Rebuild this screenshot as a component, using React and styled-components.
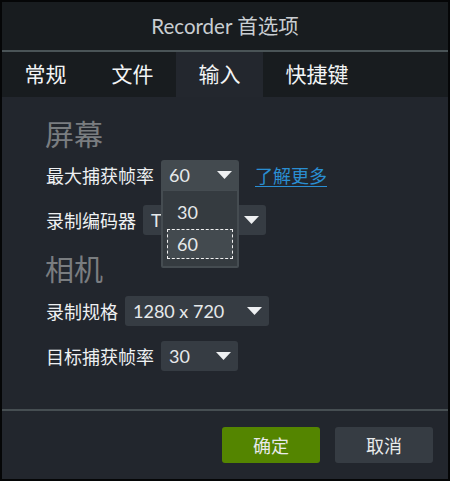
import React from "react";
import styled, { createGlobalStyle } from "styled-components";

const Global = createGlobalStyle`
  html, body { margin: 0; padding: 0; background: #000; }
  body { font-family: Lato, "Noto Sans CJK SC", sans-serif; }
  * { box-sizing: border-box; }
`;

const Window = styled.div`
  width: 450px;
  height: 481px;
  border: 2px solid #050607;
  background: #22262d;
  display: flex;
  flex-direction: column;
  overflow: hidden;
`;

const TitleBar = styled.div`
  height: 50px;
  flex: none;
  background: #181c1f;
  border-bottom: 2px solid #4a5457;
  display: flex;
  align-items: center;
  justify-content: center;
  color: #c9ced2;
  font-size: 20.5px;
  padding-bottom: 2px;
`;

const Tabs = styled.div`
  height: 45px;
  flex: none;
  background: #181c1f;
  display: flex;
`;

const Tab = styled.div`
  padding: 0 22.5px 3px;
  display: flex;
  align-items: center;
  font-size: 21px;
  color: #f2f4f5;
  background: ${(p) => (p.$active ? "#23272e" : "transparent")};
`;

const Content = styled.div`
  flex: 1;
  padding: 20px 0 0 44px;
  display: flex;
  flex-direction: column;
`;

const Heading = styled.div`
  font-size: 29px;
  line-height: 36px;
  color: #7a7d80;
  margin-left: -1px;
  margin-top: ${(p) => p.$mt || 0}px;
`;

const Row = styled.div`
  display: flex;
  align-items: center;
  gap: 7px;
  height: 30px;
  margin-top: ${(p) => p.$mt}px;
`;

const Label = styled.span`
  font-size: 18px;
  color: #eef0f2;
`;

const SelectWrap = styled.div`
  position: relative;
`;

const Select = styled.div`
  width: ${(p) => p.$w}px;
  height: 30px;
  border-radius: ${(p) => (p.$open ? "3px 3px 0 0" : "3px")};
  background: ${(p) => (p.$open ? "#434a4f" : "#363c43")};
  display: flex;
  align-items: center;
  justify-content: space-between;
  padding: 0 7px 0 8px;
  font-size: 18px;
  color: #e6e9eb;
`;

const Arrow = () => (
  <svg width="15" height="8" viewBox="0 0 15 8">
    <path d="M0 0 H15 L7.5 8 Z" fill="#eef0f2" />
  </svg>
);

const Link = styled.a`
  margin-left: 9px;
  font-size: 18px;
  color: #2a8ed2;
  text-decoration: underline;
  text-underline-offset: 3px;
`;

const Menu = styled.div`
  position: absolute;
  left: 0;
  top: 30px;
  width: 78px;
  background: #353b40;
  border: 2px solid #454c51;
  border-top-width: 1px;
  border-radius: 0 0 2px 2px;
  padding: 6px 4px 7px 4px;
  display: flex;
  flex-direction: column;
  gap: 2px;
  z-index: 2;
`;

const MenuItem = styled.div`
  height: 30px;
  display: flex;
  align-items: center;
  padding-left: 9px;
  font-size: 18px;
  color: #e6e9eb;
  background: ${(p) => (p.$focus ? "#434a4f" : "transparent")};
  border: 1px ${(p) => (p.$focus ? "dashed #f0f0f0" : "solid transparent")};
`;

const Footer = styled.div`
  flex: none;
  height: 70px;
  border-top: 2px solid #464e52;
  display: flex;
  justify-content: flex-end;
  align-items: flex-start;
  gap: 15px;
  padding: 16px 15px 0 0;
`;

const Button = styled.button`
  width: 98px;
  height: 36px;
  border: none;
  border-radius: 3px;
  font-family: Lato, "Noto Sans CJK SC", sans-serif;
  font-size: 18px;
  color: #e8eaeb;
  background: ${(p) => (p.$primary ? "#548500" : "#363c43")};
`;

export default function App() {
  return (
    <>
      <Global />
      <Window>
        <TitleBar>Recorder 首选项</TitleBar>
        <Tabs>
          <Tab>常规</Tab>
          <Tab>文件</Tab>
          <Tab $active>输入</Tab>
          <Tab>快捷键</Tab>
        </Tabs>
        <Content>
          <Heading>屏幕</Heading>
          <Row $mt={7}>
            <Label>最大捕获帧率</Label>
            <SelectWrap>
              <Select $w={78} $open>
                <span>60</span>
                <Arrow />
              </Select>
              <Menu>
                <MenuItem>30</MenuItem>
                <MenuItem $focus>60</MenuItem>
              </Menu>
            </SelectWrap>
            <Link>了解更多</Link>
          </Row>
          <Row $mt={15}>
            <Label>录制编码器</Label>
            <Select $w={123}>
              <span>TSC2</span>
              <Arrow />
            </Select>
          </Row>
          <Heading $mt={17}>相机</Heading>
          <Row $mt={8}>
            <Label>录制规格</Label>
            <Select $w={144}>
              <span>1280 x 720</span>
              <Arrow />
            </Select>
          </Row>
          <Row $mt={15}>
            <Label>目标捕获帧率</Label>
            <Select $w={77}>
              <span>30</span>
              <Arrow />
            </Select>
          </Row>
        </Content>
        <Footer>
          <Button $primary>确定</Button>
          <Button>取消</Button>
        </Footer>
      </Window>
    </>
  );
}
